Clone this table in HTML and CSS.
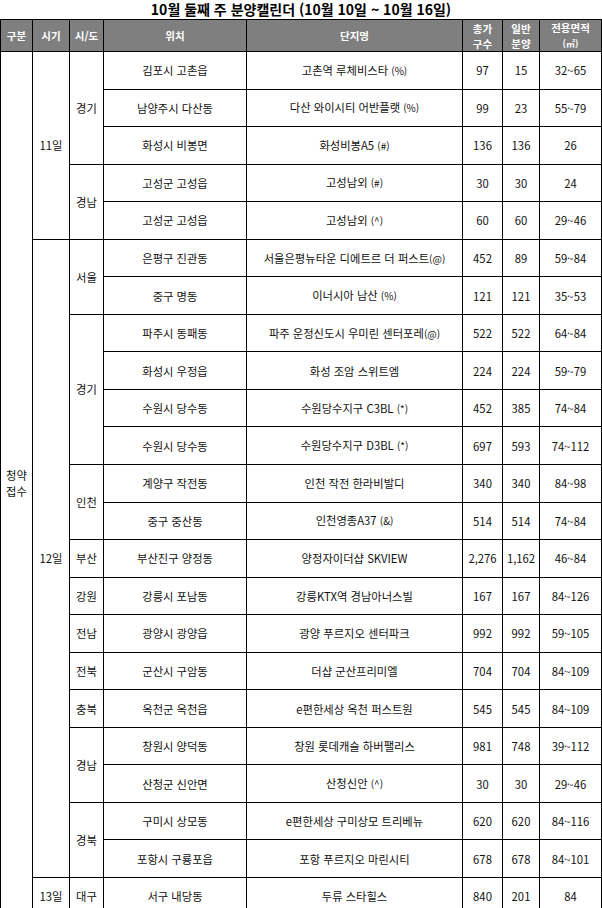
FILE: index.html
```html
<!DOCTYPE html>
<html lang="ko">
<head>
<meta charset="utf-8">
<link rel="stylesheet" href="styles.css">
</head>
<body>
<h1 class="title">10월 둘째 주 분양캘린더 (10월 10일 ~ 10월 16일)</h1>
<table class="cal">
<colgroup>
<col class="c1"><col class="c2"><col class="c3"><col class="c4"><col class="c5"><col class="c6"><col class="c7"><col class="c8">
</colgroup>
<thead>
<tr class="head">
<th>구분</th><th>시기</th><th>시/도</th><th>위치</th><th>단지명</th><th>총가<br>구수</th><th>일반<br>분양</th><th>전용면적<br><span class="unit">(㎡)</span></th>
</tr>
</thead>
<tbody>
<tr><td rowspan="23">청약<br>접수</td><td rowspan="5">11일</td><td rowspan="3">경기</td><td>김포시 고촌읍</td><td>고촌역 루체비스타 <span class="sm">(%)</span></td><td>97</td><td>15</td><td>32~65</td></tr>
<tr><td>남양주시 다산동</td><td>다산 와이시티 어반플랫 <span class="sm">(%)</span></td><td>99</td><td>23</td><td>55~79</td></tr>
<tr><td>화성시 비봉면</td><td>화성비봉A5 <span class="sm">(#)</span></td><td>136</td><td>136</td><td>26</td></tr>
<tr><td rowspan="2">경남</td><td>고성군 고성읍</td><td>고성남외 <span class="sm">(#)</span></td><td>30</td><td>30</td><td>24</td></tr>
<tr><td>고성군 고성읍</td><td>고성남외 <span class="sm">(^)</span></td><td>60</td><td>60</td><td>29~46</td></tr>
<tr><td rowspan="17">12일</td><td rowspan="2">서울</td><td>은평구 진관동</td><td>서울은평뉴타운 디에트르 더 퍼스트<span class="sm">(@)</span></td><td>452</td><td>89</td><td>59~84</td></tr>
<tr><td>중구 명동</td><td>이너시아 남산 <span class="sm">(%)</span></td><td>121</td><td>121</td><td>35~53</td></tr>
<tr><td rowspan="4">경기</td><td>파주시 동패동</td><td>파주 운정신도시 우미린 센터포레<span class="sm">(@)</span></td><td>522</td><td>522</td><td>64~84</td></tr>
<tr><td>화성시 우정읍</td><td>화성 조암 스위트엠</td><td>224</td><td>224</td><td>59~79</td></tr>
<tr><td>수원시 당수동</td><td>수원당수지구 C3BL <span class="sm">(*)</span></td><td>452</td><td>385</td><td>74~84</td></tr>
<tr><td>수원시 당수동</td><td>수원당수지구 D3BL <span class="sm">(*)</span></td><td>697</td><td>593</td><td>74~112</td></tr>
<tr><td rowspan="2">인천</td><td>계양구 작전동</td><td>인천 작전 한라비발디</td><td>340</td><td>340</td><td>84~98</td></tr>
<tr><td>중구 중산동</td><td>인천영종A37 <span class="sm">(&amp;)</span></td><td>514</td><td>514</td><td>74~84</td></tr>
<tr><td>부산</td><td>부산진구 양정동</td><td>양정자이더샵 SKVIEW</td><td>2,276</td><td>1,162</td><td>46~84</td></tr>
<tr><td>강원</td><td>강릉시 포남동</td><td>강릉KTX역 경남아너스빌</td><td>167</td><td>167</td><td>84~126</td></tr>
<tr><td>전남</td><td>광양시 광양읍</td><td>광양 푸르지오 센터파크</td><td>992</td><td>992</td><td>59~105</td></tr>
<tr><td>전북</td><td>군산시 구암동</td><td>더샵 군산프리미엘</td><td>704</td><td>704</td><td>84~109</td></tr>
<tr><td>충북</td><td>옥천군 옥천읍</td><td>e편한세상 옥천 퍼스트원</td><td>545</td><td>545</td><td>84~109</td></tr>
<tr><td rowspan="2">경남</td><td>창원시 양덕동</td><td>창원 롯데캐슬 하버팰리스</td><td>981</td><td>748</td><td>39~112</td></tr>
<tr><td>산청군 신안면</td><td>산청신안 <span class="sm">(^)</span></td><td>30</td><td>30</td><td>29~46</td></tr>
<tr><td rowspan="2">경북</td><td>구미시 상모동</td><td>e편한세상 구미상모 트리베뉴</td><td>620</td><td>620</td><td>84~116</td></tr>
<tr><td>포항시 구룡포읍</td><td>포항 푸르지오 마린시티</td><td>678</td><td>678</td><td>84~101</td></tr>
<tr><td>13일</td><td>대구</td><td>서구 내당동</td><td>두류 스타힐스</td><td>840</td><td>201</td><td>84</td></tr>
</tbody>
</table>
</body>
</html>
```

FILE: styles.css
```css
html, body {
  margin: 0;
  padding: 0;
  background: #fff;
}
body {
  font-family: "Noto Sans CJK KR", "Noto Sans", sans-serif;
  color: #111;
}
.title {
  margin: 0;
  height: 19px;
  line-height: 19px;
  font-size: 14px;
  font-weight: bold;
  text-align: center;
  color: #000;
}
.cal {
  width: 602px;
  table-layout: fixed;
  border-collapse: collapse;
  font-size: 11.3px;
}
.c1 { width: 32px; }
.c2 { width: 37px; }
.c3 { width: 34px; }
.c4 { width: 143px; }
.c5 { width: 216px; }
.c6 { width: 40px; }
.c7 { width: 37px; }
.c8 { width: 62px; }
.cal th, .cal td {
  border: 1px solid #000;
  padding: 0;
  text-align: center;
  vertical-align: middle;
  line-height: 16px;
}
.head {
  height: 31px;
}
.cal .head th {
  background: #7f7f7f;
  color: #fff;
  font-weight: bold;
  font-size: 10.5px;
  line-height: 15px;
}
.unit {
  font-size: 9px;
}
.cal tbody tr {
  height: 37.55px;
}
.sm {
  font-size: 10px;
}
```
